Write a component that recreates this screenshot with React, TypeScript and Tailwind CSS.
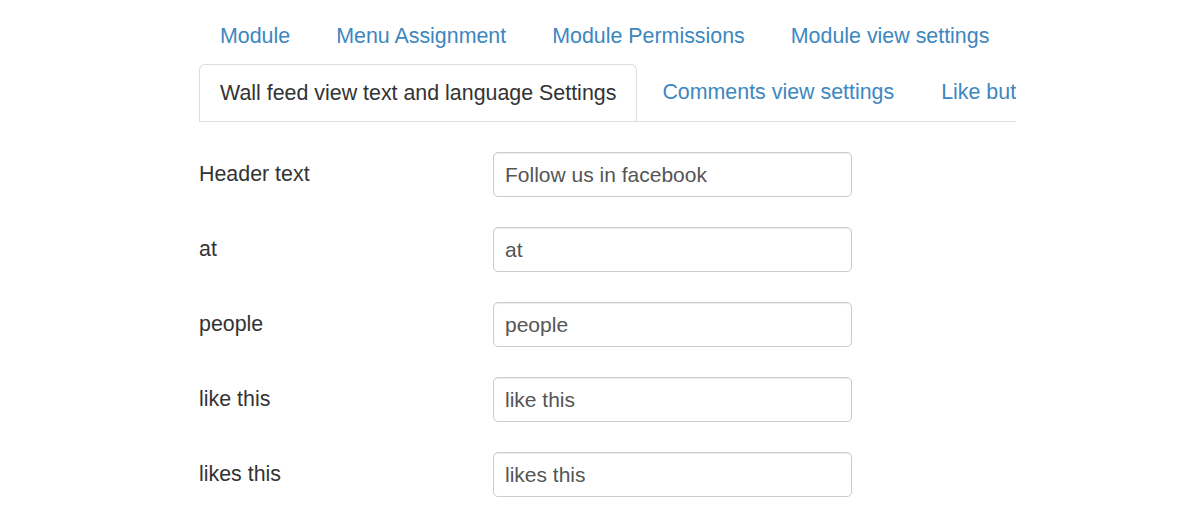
import React from 'react';

const topTabs = ['Module', 'Menu Assignment', 'Module Permissions', 'Module view settings'];

const fields = [
  { label: 'Header text', value: 'Follow us in facebook' },
  { label: 'at', value: 'at' },
  { label: 'people', value: 'people' },
  { label: 'like this', value: 'like this' },
  { label: 'likes this', value: 'likes this' },
];

const App: React.FC = () => {
  return (
    <div className="w-[1200px] h-[525px] bg-white overflow-hidden text-[21.4px] text-[#333] font-['Liberation_Sans',Arial,sans-serif]">
      <div className="ml-[199px] w-[817px] pt-[6px]">
        {/* First row of tabs */}
        <div className="flex h-[58px] items-center pt-[4px]">
          {topTabs.map((tab) => (
            <a key={tab} className="px-[21px] mr-[4px] text-[#3d87bf] whitespace-nowrap leading-none">
              {tab}
            </a>
          ))}
        </div>

        {/* Second row of tabs, clipped at the right edge */}
        <div className="flex h-[58px] overflow-hidden border-b border-[#ddd]">
          <div className="-mb-px flex items-center px-[20px] border border-[#ddd] border-b-white rounded-t-[6px] bg-white whitespace-nowrap">
            Wall feed view text and language Settings
          </div>
          <a className="flex items-center pl-[25px] pr-[21px] text-[#3d87bf] whitespace-nowrap">
            Comments view settings
          </a>
          <a className="flex items-center pl-[26px] text-[#3d87bf] whitespace-nowrap">
            Like button settings
          </a>
        </div>

        {/* Form rows */}
        <div className="pt-[30px] flex flex-col gap-[30px]">
          {fields.map((f) => (
            <div key={f.label} className="flex items-center h-[45px]">
              <label className="w-[294px]">{f.label}</label>
              <input
                readOnly
                value={f.value}
                className="w-[359px] h-[45px] px-[11px] border border-[#ccc] rounded-[5px] text-[21px] text-[#555] shadow-[inset_0_1px_1px_rgba(0,0,0,0.075)] outline-none"
              />
            </div>
          ))}
        </div>
      </div>
    </div>
  );
};

export default App;
